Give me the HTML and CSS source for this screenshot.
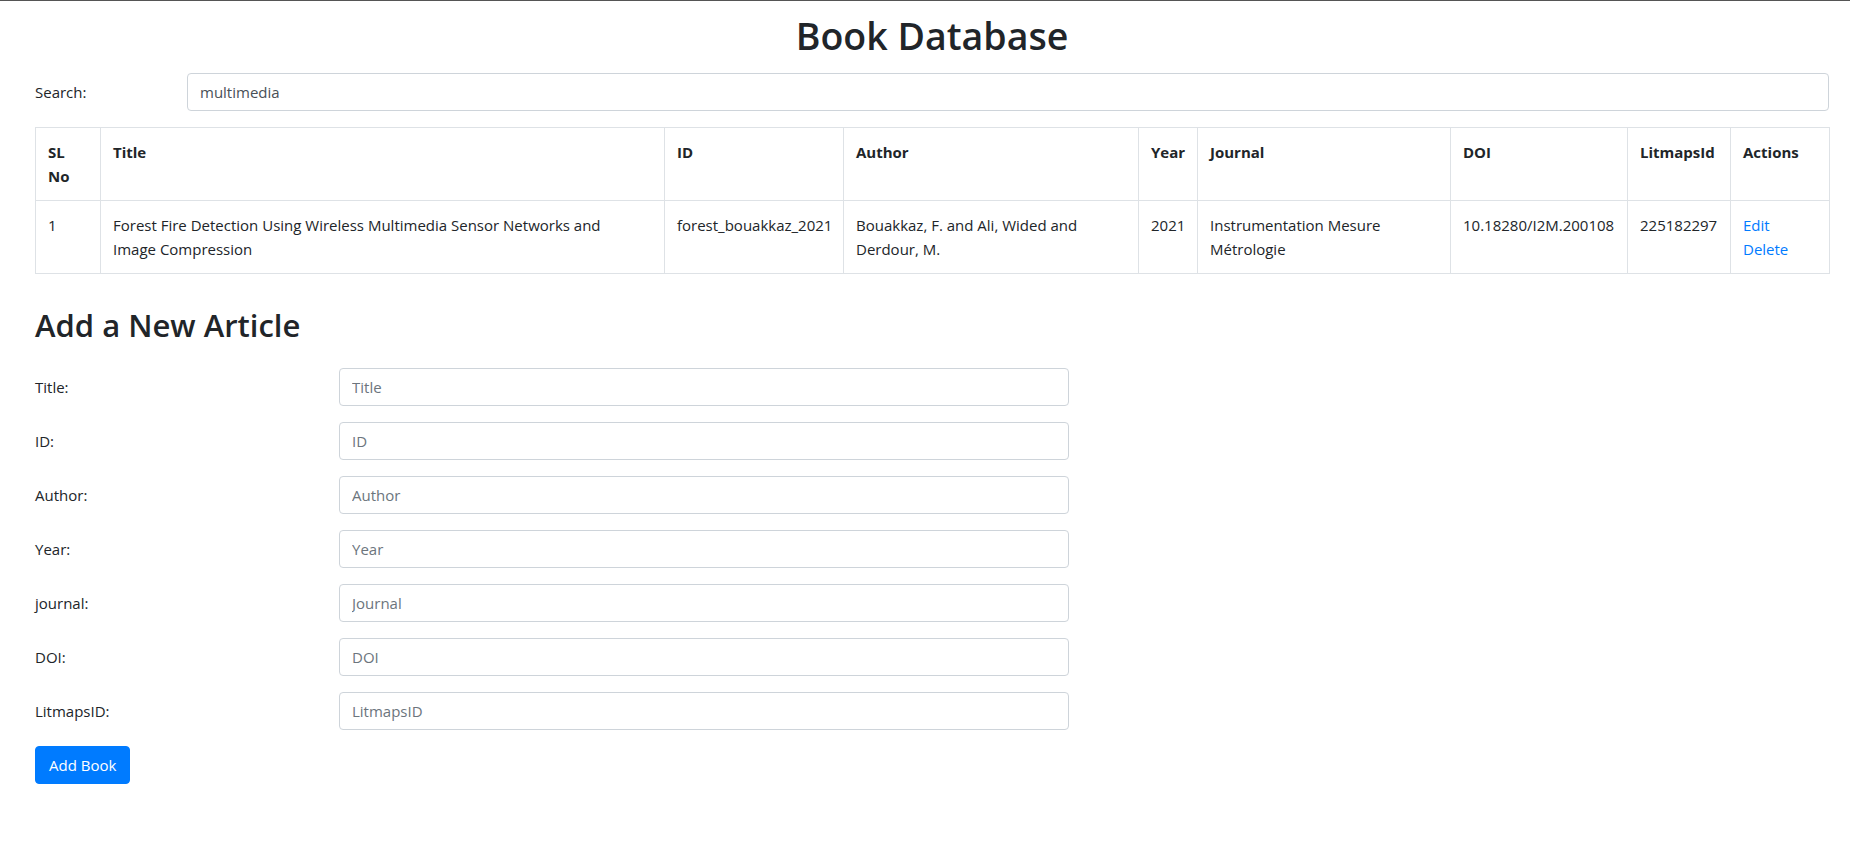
FILE: index.html
```html
<!DOCTYPE html>
<html lang="en">
<head>
<meta charset="utf-8">
<title>Book Database</title>
<link rel="stylesheet" href="styles.css">
</head>
<body>
<div class="page">
  <h1 class="page-title">Book Database</h1>

  <div class="search-row">
    <label class="field-label" for="search">Search:</label>
    <input class="form-control" id="search" type="text" value="multimedia">
  </div>

  <table class="books">
    <colgroup>
      <col class="c-sl"><col class="c-title"><col class="c-id"><col class="c-author"><col class="c-year"><col class="c-journal"><col class="c-doi"><col class="c-lit"><col class="c-actions">
    </colgroup>
    <thead>
      <tr>
        <th>SL No</th>
        <th>Title</th>
        <th>ID</th>
        <th>Author</th>
        <th>Year</th>
        <th>Journal</th>
        <th>DOI</th>
        <th>LitmapsId</th>
        <th>Actions</th>
      </tr>
    </thead>
    <tbody>
      <tr>
        <td>1</td>
        <td class="title-cell">Forest Fire Detection Using Wireless Multimedia Sensor Networks and Image Compression</td>
        <td class="nowrap">forest_bouakkaz_2021</td>
        <td>Bouakkaz, F. and Ali, Wided and Derdour, M.</td>
        <td class="nowrap">2021</td>
        <td>Instrumentation Mesure Métrologie</td>
        <td class="nowrap">10.18280/I2M.200108</td>
        <td class="nowrap">225182297</td>
        <td><a href="#" class="action">Edit</a><a href="#" class="action">Delete</a></td>
      </tr>
    </tbody>
  </table>

  <h2 class="section-title">Add a New Article</h2>

  <form class="article-form">
    <div class="form-row">
      <label class="field-label" for="f-title">Title:</label>
      <input class="form-control" id="f-title" type="text" placeholder="Title">
    </div>
    <div class="form-row">
      <label class="field-label" for="f-id">ID:</label>
      <input class="form-control" id="f-id" type="text" placeholder="ID">
    </div>
    <div class="form-row">
      <label class="field-label" for="f-author">Author:</label>
      <input class="form-control" id="f-author" type="text" placeholder="Author">
    </div>
    <div class="form-row">
      <label class="field-label" for="f-year">Year:</label>
      <input class="form-control" id="f-year" type="text" placeholder="Year">
    </div>
    <div class="form-row">
      <label class="field-label" for="f-journal">journal:</label>
      <input class="form-control" id="f-journal" type="text" placeholder="Journal">
    </div>
    <div class="form-row">
      <label class="field-label" for="f-doi">DOI:</label>
      <input class="form-control" id="f-doi" type="text" placeholder="DOI">
    </div>
    <div class="form-row">
      <label class="field-label" for="f-lit">LitmapsID:</label>
      <input class="form-control" id="f-lit" type="text" placeholder="LitmapsID">
    </div>
    <button type="button" class="btn-primary">Add Book</button>
  </form>
</div>
</body>
</html>
```

FILE: styles.css
```css
* { box-sizing: border-box; }

html, body {
  margin: 0;
  padding: 0;
  background: #fff;
}

body {
  border-top: 1px solid #555;
  font-family: "Open Sans", "Noto Sans", sans-serif;
  font-size: 15px;
  line-height: 24px;
  color: #212529;
}

.page {
  padding: 0 21px 40px 35px;
}

.page-title {
  margin: 12px 0 15px;
  font-size: 37.5px;
  line-height: 45px;
  font-weight: 600;
  text-align: center;
  color: #212529;
}

.search-row {
  display: grid;
  grid-template-columns: 122px 1fr;
  column-gap: 30px;
  margin-bottom: 16px;
}

.field-label {
  padding-top: 7px;
  padding-bottom: 7px;
  line-height: 24px;
}

.form-control {
  display: block;
  width: 100%;
  height: 38px;
  padding: 6px 12px;
  font-family: inherit;
  font-size: 15px;
  line-height: 24px;
  color: #495057;
  background: #fff;
  border: 1px solid #ced4da;
  border-radius: 4px;
  outline: none;
}

.form-control::placeholder {
  color: #6c757d;
  opacity: 1;
}

.books {
  width: 100%;
  table-layout: fixed;
  border-collapse: collapse;
  margin-bottom: 16px;
}

.c-sl { width: 65px; }
.c-title { width: 564px; }
.c-id { width: 179px; }
.c-author { width: 295px; }
.c-year { width: 59px; }
.c-journal { width: 253px; }
.c-doi { width: 177px; }
.c-lit { width: 103px; }
.c-actions { width: 99px; }

.books th,
.books td {
  padding: 12px;
  border: 1px solid #dee2e6;
  vertical-align: top;
  text-align: left;
}

.books th {
  font-weight: 700;
}

.books .title-cell {
  padding-right: 28px;
}

.nowrap { white-space: nowrap; }

.action {
  display: block;
  color: #007bff;
  text-decoration: none;
}

.section-title {
  margin: 33px 0 24px;
  font-size: 31px;
  line-height: 37px;
  font-weight: 600;
}

.form-row {
  display: grid;
  grid-template-columns: 274px 730px;
  column-gap: 30px;
  margin-bottom: 16px;
}

.btn-primary {
  display: inline-block;
  height: 38px;
  padding: 6px 13px;
  font-family: inherit;
  font-size: 15px;
  line-height: 24px;
  color: #fff;
  background: #007bff;
  border: 1px solid #007bff;
  border-radius: 4px;
  cursor: pointer;
}
```
